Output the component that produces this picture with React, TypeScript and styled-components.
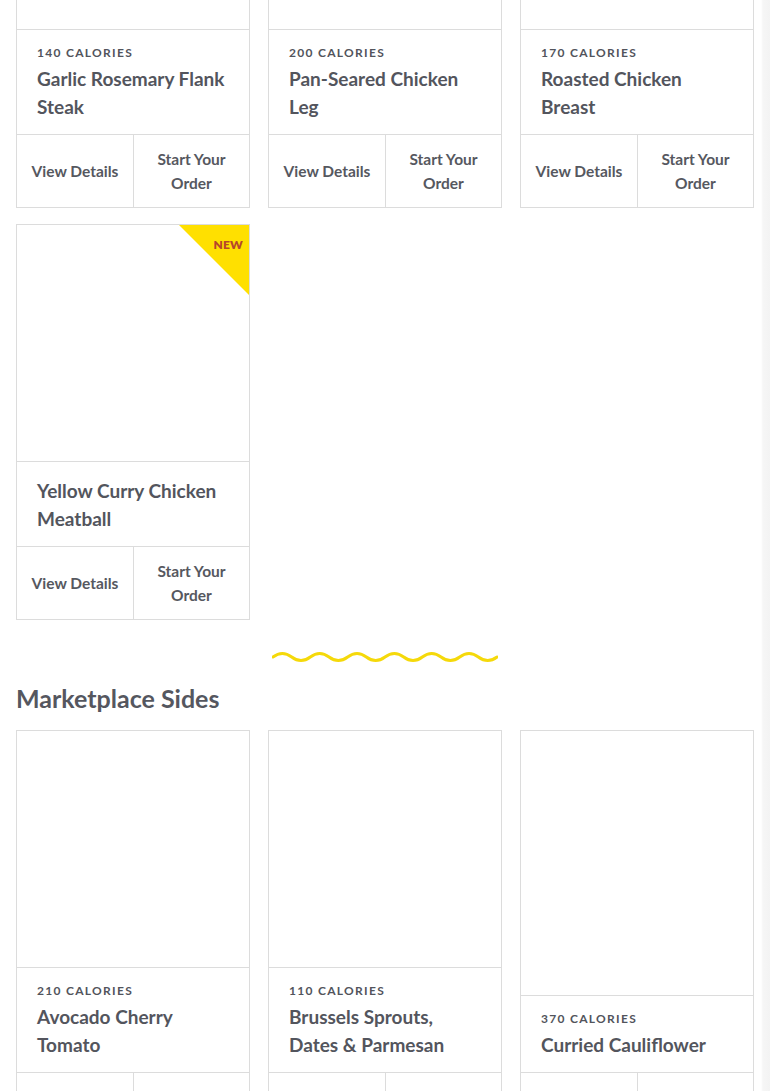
import React from "react";
import styled, { createGlobalStyle } from "styled-components";

const GlobalStyle = createGlobalStyle`
  html, body {
    margin: 0;
    padding: 0;
  }
  body {
    background: linear-gradient(to right, #ffffff 0, #ffffff 761px, #f6f6f6 763px, #f3f3f3 770px);
    font-family: Lato, "Open Sans", Arial, sans-serif;
    color: #4f5159;
    overflow: hidden;
  }
`;

const Page = styled.div`
  width: 770px;
  box-sizing: border-box;
  padding: 0 16px 40px;
`;

const Grid = styled.div<{ $offset?: number }>`
  display: grid;
  grid-template-columns: repeat(3, 234px);
  column-gap: 18px;
  row-gap: 16px;
  align-items: stretch;
  margin-top: ${(p) => (p.$offset ? `${p.$offset}px` : "0")};
`;

const Card = styled.div`
  position: relative;
  display: flex;
  flex-direction: column;
  border: 1px solid #dcdcdc;
  background: #fff;
  overflow: hidden;
`;

const ImageArea = styled.div`
  flex: 1 0 236px;
  min-height: 236px;
  background: #fff;
  border-bottom: 1px solid #dcdcdc;
`;

const Info = styled.div`
  padding: 15px 20px 13px;
  border-bottom: 1px solid #dcdcdc;
`;

const Calories = styled.div`
  font-size: 12px;
  line-height: 15px;
  font-weight: 700;
  letter-spacing: 1.3px;
  text-transform: uppercase;
  color: #52545c;
  margin-bottom: 5px;
`;

const Title = styled.div`
  font-size: 19px;
  line-height: 28px;
  font-weight: 700;
  color: #53555d;
`;

const Actions = styled.div`
  display: grid;
  grid-template-columns: 116px 1fr;
  height: 72px;
`;

const ActionButton = styled.button<{ $divider?: boolean }>`
  appearance: none;
  background: #fff;
  border: none;
  border-left: ${(p) => (p.$divider ? "1px solid #dcdcdc" : "none")};
  padding: 0 12px;
  font-family: Lato, "Open Sans", Arial, sans-serif;
  font-size: 15.5px;
  line-height: 24px;
  font-weight: 700;
  color: #56585f;
  text-align: center;
  cursor: pointer;
`;

const Badge = styled.div`
  position: absolute;
  top: 0;
  right: 0;
  width: 70px;
  height: 70px;
  background: #ffe000;
  clip-path: polygon(0 0, 100% 0, 100% 100%);
`;

const BadgeText = styled.span`
  position: absolute;
  top: 12px;
  right: 6px;
  font-size: 12px;
  font-weight: 800;
  color: #b6472b;
  letter-spacing: 0.2px;
`;

const Divider = styled.div`
  display: flex;
  justify-content: center;
  margin-top: 31px;
  height: 12px;
`;

const SectionHeading = styled.h2`
  margin: 19px 0 16px;
  font-size: 25px;
  line-height: 32px;
  font-weight: 700;
  color: #55575f;
`;

type Item = { cal?: number; title: string; isNew?: boolean };

const MenuCard: React.FC<{ item: Item }> = ({ item }) => (
  <Card>
    <ImageArea />
    {item.isNew && (
      <Badge>
        <BadgeText>NEW</BadgeText>
      </Badge>
    )}
    <Info>
      {item.cal !== undefined && <Calories>{item.cal} Calories</Calories>}
      <Title>{item.title}</Title>
    </Info>
    <Actions>
      <ActionButton>View Details</ActionButton>
      <ActionButton $divider>
        Start Your
        <br />
        Order
      </ActionButton>
    </Actions>
  </Card>
);

const Wave: React.FC = () => {
  const halfW = 224 / 12;
  let d = `M1 6`;
  for (let i = 0; i < 12; i++) {
    const dir = i % 2 === 0 ? -1 : 1;
    d += ` q${(halfW / 2).toFixed(2)} ${dir * 7} ${halfW.toFixed(2)} 0`;
  }
  return (
    <svg width="226" height="12" viewBox="0 0 226 12">
      <path d={d} fill="none" stroke="#f5d90a" strokeWidth="3" strokeLinecap="round" />
    </svg>
  );
};

const mains: Item[] = [
  { cal: 140, title: "Garlic Rosemary Flank Steak" },
  { cal: 200, title: "Pan-Seared Chicken Leg" },
  { cal: 170, title: "Roasted Chicken Breast" },
  { title: "Yellow Curry Chicken Meatball", isNew: true },
];

const sides: Item[] = [
  { cal: 210, title: "Avocado Cherry Tomato" },
  { cal: 110, title: "Brussels Sprouts, Dates & Parmesan" },
  { cal: 370, title: "Curried Cauliflower" },
];

export default function App() {
  return (
    <>
      <GlobalStyle />
      <Page>
        <Grid $offset={-208}>
          {mains.map((m) => (
            <MenuCard key={m.title} item={m} />
          ))}
        </Grid>
        <Divider>
          <Wave />
        </Divider>
        <SectionHeading>Marketplace Sides</SectionHeading>
        <Grid>
          {sides.map((m) => (
            <MenuCard key={m.title} item={m} />
          ))}
        </Grid>
      </Page>
    </>
  );
}
